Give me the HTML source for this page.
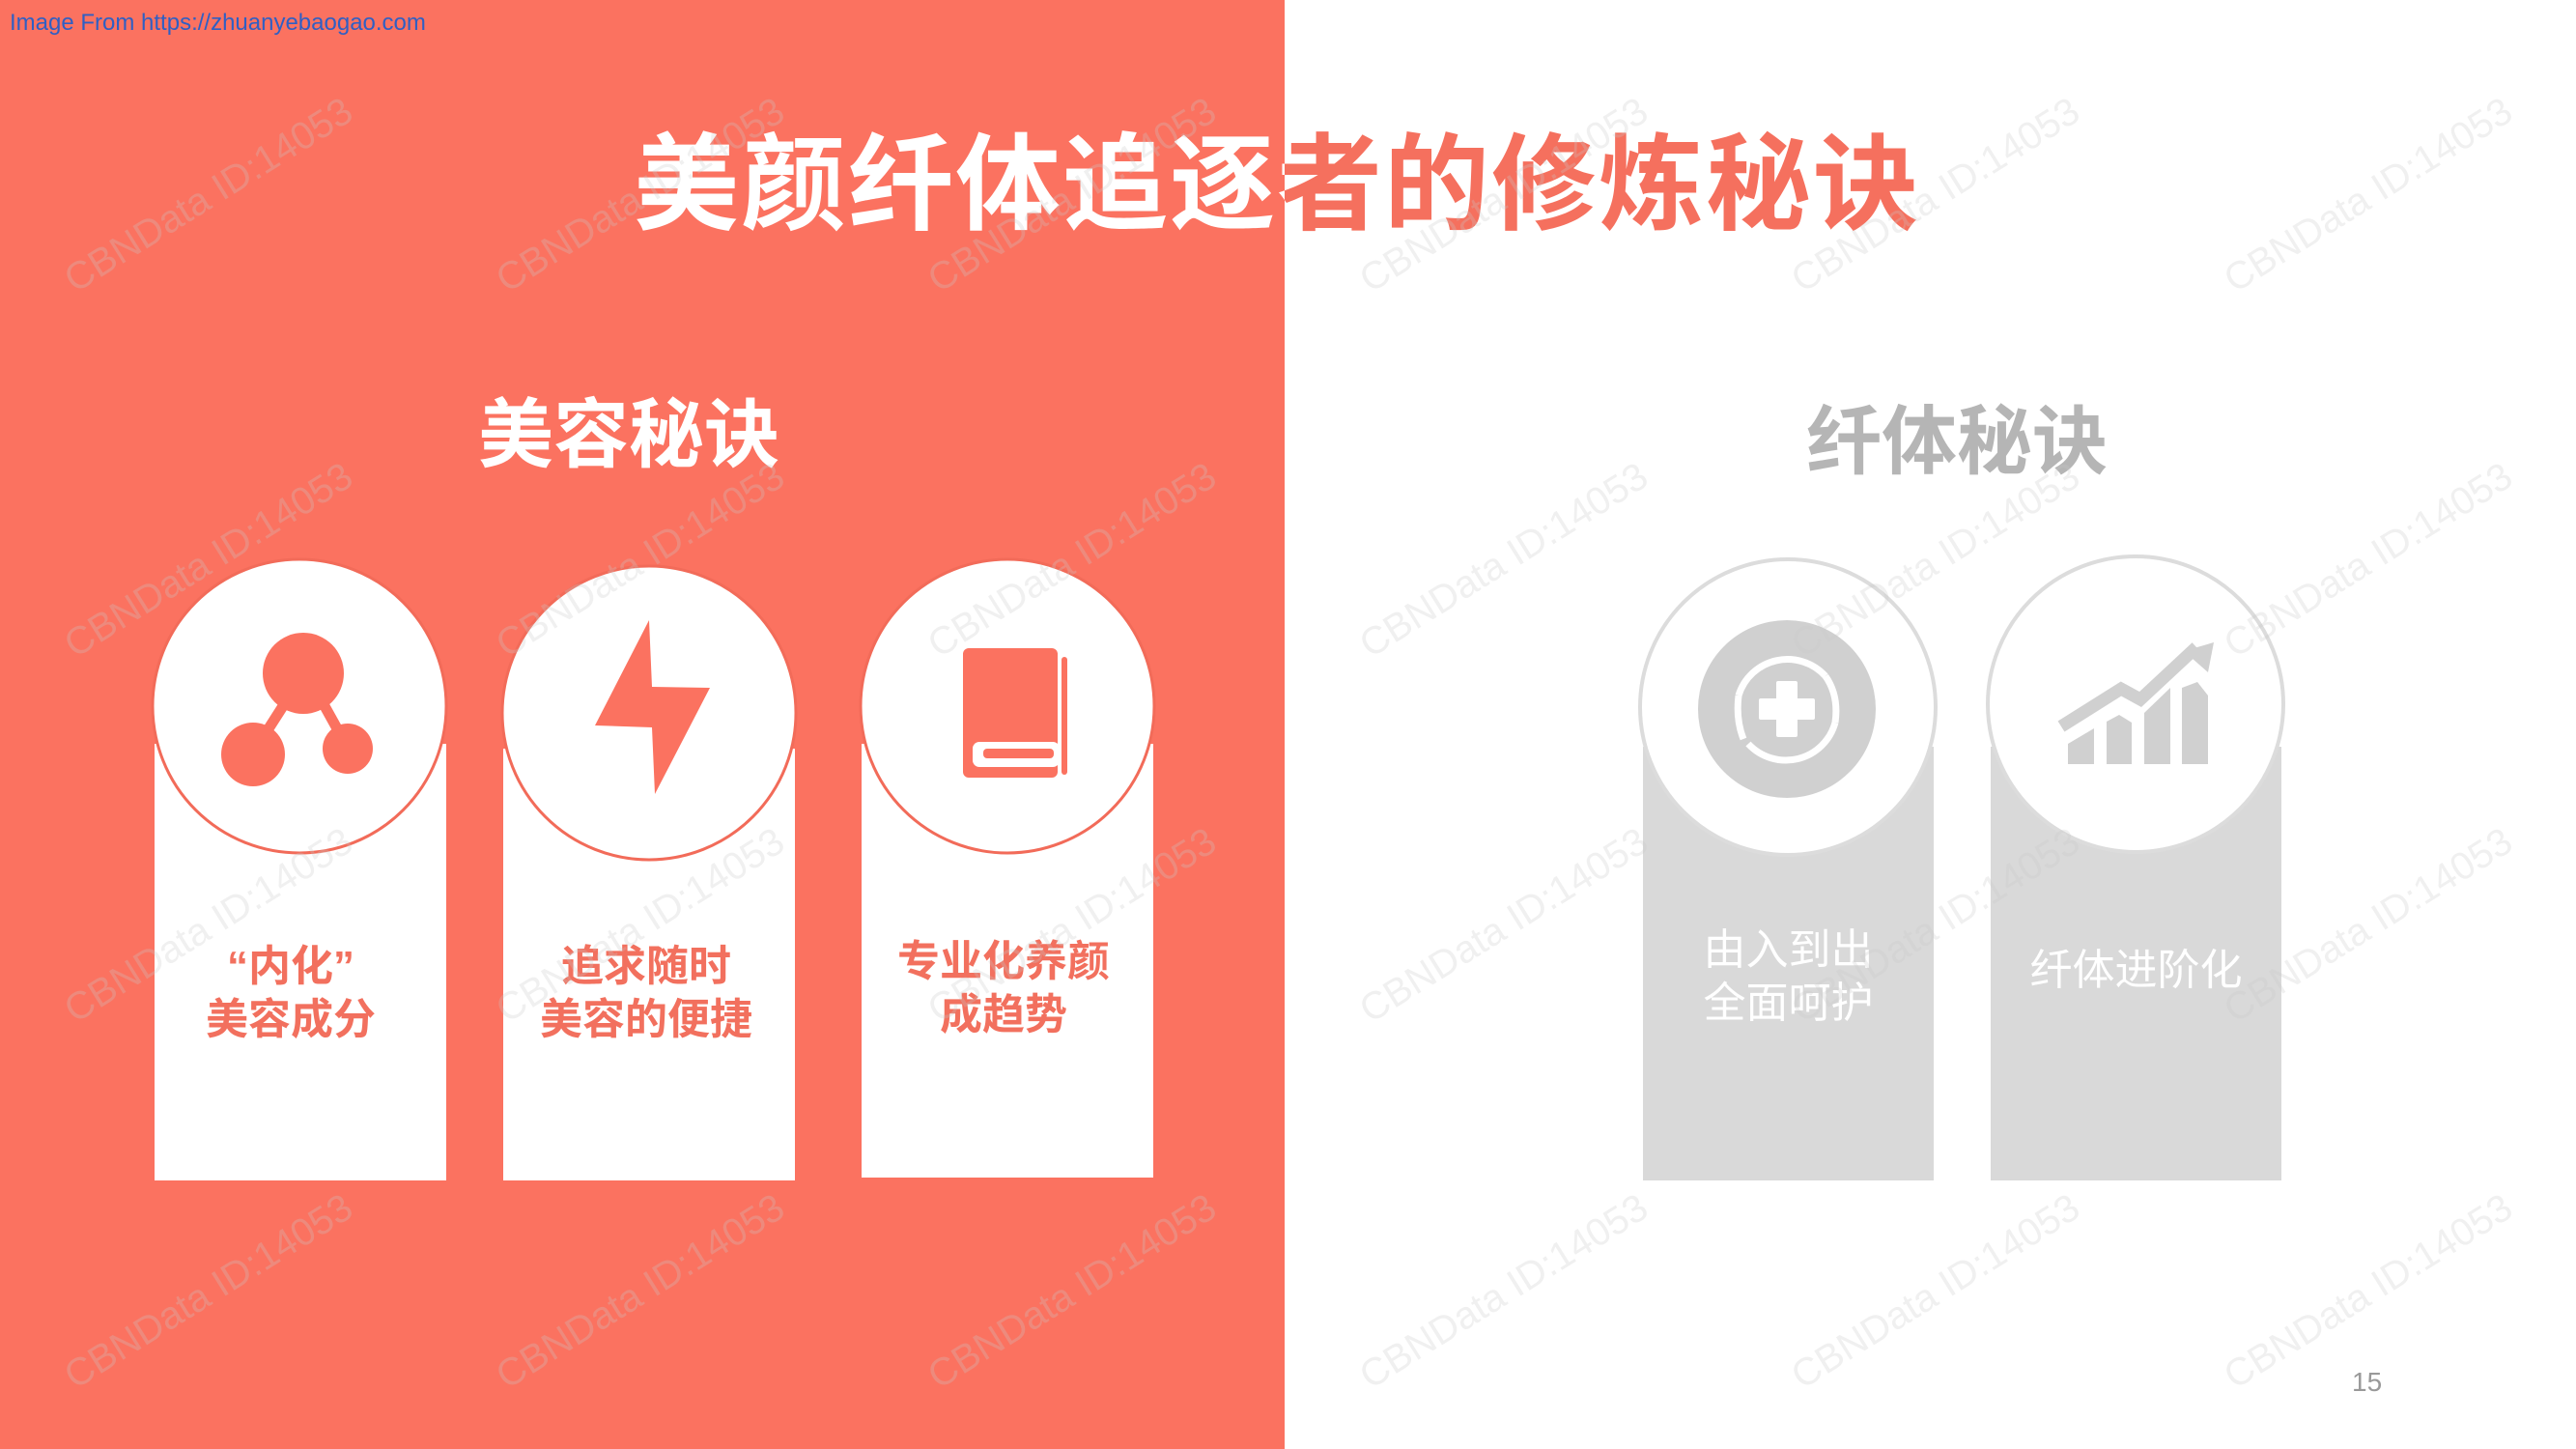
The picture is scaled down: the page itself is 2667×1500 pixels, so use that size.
<!DOCTYPE html>
<html><head><meta charset="utf-8"><style>
*{margin:0;padding:0;box-sizing:border-box}
body{width:2667px;height:1500px;position:relative;overflow:hidden;background:#fff;font-family:"Liberation Sans","Noto Sans CJK SC",sans-serif}
.red{position:absolute;left:0;top:0;width:1330px;height:1500px;background:#fb7260}
.abs{position:absolute}
.cjk{font-family:"Liberation Sans","Noto Sans CJK SC",sans-serif;font-weight:700}
.title{left:656px;top:122px;width:1360px;font-size:109px;line-height:140px;white-space:nowrap;letter-spacing:2px;
background:linear-gradient(90deg,#fff 0,#fff 674px,#f5705e 674px);-webkit-background-clip:text;background-clip:text;color:transparent}
.wm{position:absolute;font-size:40px;color:rgba(200,200,200,0.28);transform:rotate(-32deg);white-space:nowrap;font-family:"Liberation Sans",sans-serif}
.ctext{position:absolute;text-align:center;font-size:44px;line-height:55px;font-weight:700}
</style></head><body>
<div class="red"></div>
<div class="abs" style="left:10px;top:9px;font-size:24px;color:#2f5fc4;line-height:30px">Image From https://zhuanyebaogao.com</div>
<div class="abs cjk title">美颜纤体追逐者的修炼秘诀</div>
<div class="abs cjk" style="left:495px;top:400px;font-size:78px;line-height:100px;color:#fff">美容秘诀</div>
<div class="abs cjk" style="left:1870px;top:407px;font-size:78px;line-height:100px;color:#b5b5b5">纤体秘诀</div>

<svg class="abs" style="left:0;top:0" width="2667" height="1500">
 <g fill="#fff">
  <rect x="160" y="770" width="302" height="452"/>
  <rect x="521" y="775" width="302" height="447"/>
  <rect x="892" y="770" width="302" height="449"/>
 </g>
 <g fill="#fff" stroke="#f26b59" stroke-width="3">
  <circle cx="310" cy="731" r="152"/>
  <circle cx="672" cy="738" r="152"/>
  <circle cx="1043" cy="731" r="152"/>
 </g>
 <g fill="#fb7260" stroke="#fb7260">
  <line x1="300" y1="720" x2="268" y2="770" stroke-width="11"/>
  <line x1="330" y1="720" x2="355" y2="765" stroke-width="11"/>
  <circle cx="314" cy="697" r="42" stroke="none"/>
  <circle cx="262" cy="781" r="33" stroke="none"/>
  <circle cx="360" cy="775" r="26" stroke="none"/>
 </g>
 <polygon fill="#fb7260" points="672,642 616,751 675,753 678,822 735,712 675,711"/>
 <rect x="997" y="671" width="98" height="134" rx="6" fill="#fb7260"/>
 <rect x="1007" y="768" width="90" height="26" rx="7" fill="#fff"/>
 <rect x="1018" y="775" width="73" height="10" rx="4" fill="#fb7260"/>
 <rect x="1099" y="680" width="6" height="122" rx="3" fill="#fb7260"/>

 <g fill="#d9d9d9">
  <rect x="1701" y="773" width="301" height="449"/>
  <rect x="2061" y="773" width="301" height="449"/>
 </g>
 <g fill="#fff" stroke="#dcdcdc" stroke-width="4">
  <circle cx="1851" cy="732" r="153"/>
  <circle cx="2211" cy="729" r="153"/>
 </g>
 <circle cx="1850" cy="734" r="92" fill="#d0d0d0"/>
 <path d="M1800,720 A53,53 0 0 1 1890,700" fill="none" stroke="#fff" stroke-width="7"/>
 <path d="M1900,748 A53,53 0 0 1 1810,770" fill="none" stroke="#fff" stroke-width="7"/>
 <path d="M1805,765 q-8,-20 -5,-45" fill="none" stroke="#fff" stroke-width="7"/>
 <path d="M1890,700 q14,20 10,48" fill="none" stroke="#fff" stroke-width="7"/>
 <path d="M1841,707h18v18h18v18h-18v18h-18v-18h-18v-18h18z" fill="#fff" stroke="#fff" stroke-width="4" stroke-linejoin="round"/>
 <g fill="#d0d0d0">
  <path d="M2141,770 L2168,754 L2168,791 L2141,791Z"/>
  <path d="M2181,747 L2194,740 L2207,748 L2207,791 L2181,791Z"/>
  <path d="M2220,738 L2247,712 L2247,791 L2220,791Z"/>
  <path d="M2259,712 L2275,706 L2286,720 L2286,791 L2259,791Z"/>
 </g>
 <polyline points="2134,752 2196,713 2216,724 2274,670" fill="none" stroke="#d0d0d0" stroke-width="13"/>
 <polygon points="2292,665 2261,674 2286,696" fill="#d0d0d0"/>
</svg>

<div class="ctext" style="left:150px;width:302px;top:973px;color:#f2705e">“内化”<br>美容成分</div>
<div class="ctext" style="left:518px;width:302px;top:973px;color:#f2705e">追求随时<br>美容的便捷</div>
<div class="ctext" style="left:888px;width:302px;top:968px;color:#f2705e">专业化养颜<br>成趋势</div>
<div class="ctext" style="left:1701px;width:301px;top:956px;color:#fff;font-weight:400">由入到出<br>全面呵护</div>
<div class="ctext" style="left:2061px;width:301px;top:977px;color:#fff;font-weight:400">纤体进阶化</div>

<div class="abs" style="left:2435px;top:1415px;font-size:28px;color:#999">15</div>

<div class="wm" style="left:45px;top:180px">CBNData ID:14053</div>
<div class="wm" style="left:492px;top:180px">CBNData ID:14053</div>
<div class="wm" style="left:939px;top:180px">CBNData ID:14053</div>
<div class="wm" style="left:1386px;top:180px">CBNData ID:14053</div>
<div class="wm" style="left:1833px;top:180px">CBNData ID:14053</div>
<div class="wm" style="left:2281px;top:180px">CBNData ID:14053</div>
<div class="wm" style="left:45px;top:558px">CBNData ID:14053</div>
<div class="wm" style="left:492px;top:558px">CBNData ID:14053</div>
<div class="wm" style="left:939px;top:558px">CBNData ID:14053</div>
<div class="wm" style="left:1386px;top:558px">CBNData ID:14053</div>
<div class="wm" style="left:1833px;top:558px">CBNData ID:14053</div>
<div class="wm" style="left:2281px;top:558px">CBNData ID:14053</div>
<div class="wm" style="left:45px;top:936px">CBNData ID:14053</div>
<div class="wm" style="left:492px;top:936px">CBNData ID:14053</div>
<div class="wm" style="left:939px;top:936px">CBNData ID:14053</div>
<div class="wm" style="left:1386px;top:936px">CBNData ID:14053</div>
<div class="wm" style="left:1833px;top:936px">CBNData ID:14053</div>
<div class="wm" style="left:2281px;top:936px">CBNData ID:14053</div>
<div class="wm" style="left:45px;top:1315px">CBNData ID:14053</div>
<div class="wm" style="left:492px;top:1315px">CBNData ID:14053</div>
<div class="wm" style="left:939px;top:1315px">CBNData ID:14053</div>
<div class="wm" style="left:1386px;top:1315px">CBNData ID:14053</div>
<div class="wm" style="left:1833px;top:1315px">CBNData ID:14053</div>
<div class="wm" style="left:2281px;top:1315px">CBNData ID:14053</div>
</body></html>
